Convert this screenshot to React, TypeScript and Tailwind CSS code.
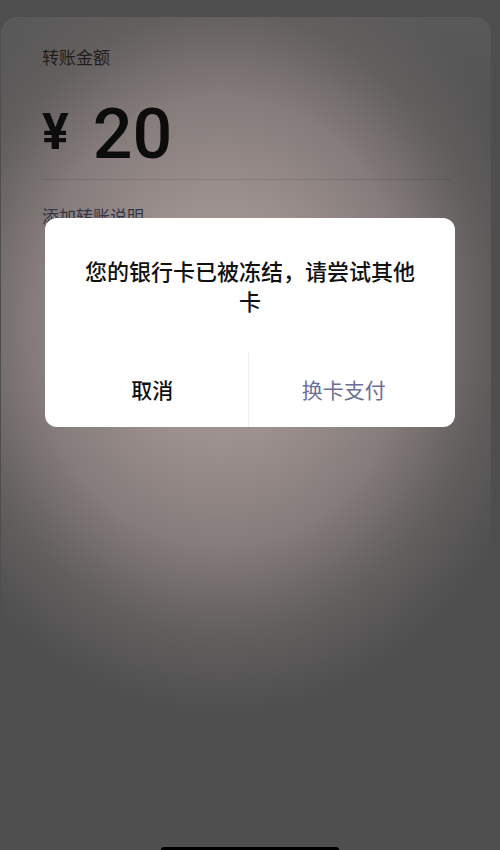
import React from "react"

const cjk = { fontFamily: '"Noto Sans CJK SC", "Noto Sans", sans-serif' }

const TransferAmount: React.FC = () => (
  <div className="px-[41px] pt-[28px]">
    <p className="text-[17px] leading-[24px] text-[#1f1d1d]" style={cjk}>
      转账金额
    </p>
    <div
      className="mt-[30px] flex items-center gap-[24px] text-[#0d0c0c]"
      style={{ fontFamily: 'Roboto, "Noto Sans", sans-serif' }}
    >
      <span className="-mt-[4px] text-[50px] font-bold leading-none">¥</span>
      <span className="text-[70px] font-medium leading-none">20</span>
    </div>
    <div className="mt-[10px] h-px w-[409px] bg-black/10" />
    <p className="mt-[24px] text-[17px] leading-[24px] text-[#35364a]" style={cjk}>
      添加转账说明
    </p>
  </div>
)

const FrozenDialog: React.FC = () => (
  <div className="absolute left-[45px] top-[218px] w-[410px] overflow-hidden rounded-[12px] bg-white">
    <p
      className="px-[38px] pt-[37px] text-center text-[22px] font-medium leading-[30px] text-[#111]"
      style={cjk}
    >
      您的银行卡已被冻结，请尝试其他卡
    </p>
    <div className="mt-[38px] flex h-[74px]">
      <button
        className="flex flex-1 items-center justify-center pl-[12px] text-[21px] font-medium text-[#111]"
        style={cjk}
      >
        取消
      </button>
      <div className="w-px bg-[#eeeeee]" />
      <button
        className="flex flex-1 items-center justify-center pr-[16px] text-[21px] text-[#6b7099]"
        style={cjk}
      >
        换卡支付
      </button>
    </div>
  </div>
)

export default function App() {
  return (
    <div className="relative h-[850px] w-[500px] overflow-hidden bg-[#4e4e4e]">
      <div className="pt-[17px]">
        <div className="ml-[1px] h-[833px] w-[490px] rounded-t-[16px] bg-[radial-gradient(ellipse_330px_390px_at_220px_305px,#a89b99_0%,#9d918f_30%,#847b7a_58%,#625f5e_80%,rgba(79,79,79,0)_100%),linear-gradient(to_bottom,#595959_0px,#4f4f4f_160px,#4f4f4f_100%)]">
          <TransferAmount />
        </div>
      </div>
      <FrozenDialog />
      <div className="absolute bottom-[-3px] left-[161px] h-[6px] w-[178px] rounded-full bg-black" />
    </div>
  )
}
